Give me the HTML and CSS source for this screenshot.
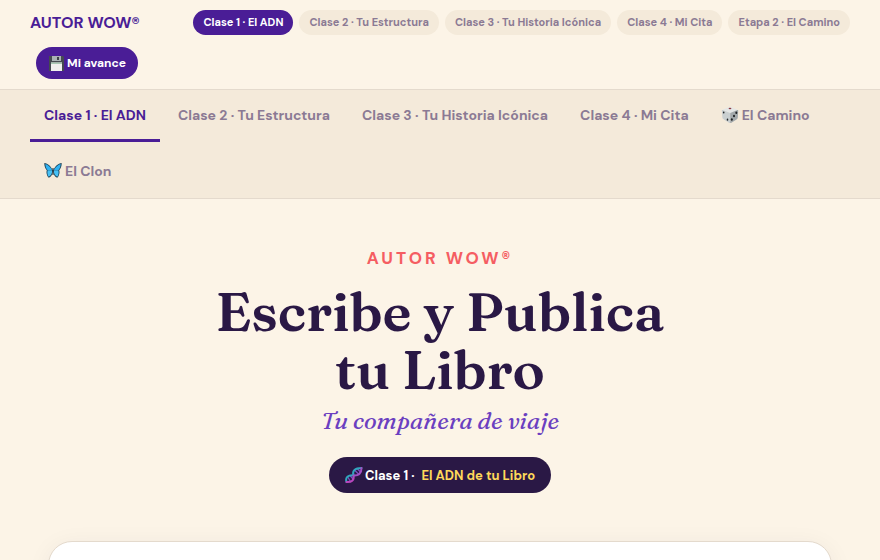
FILE: index.html
```html
<!DOCTYPE html>
<html lang="es">

<head>
  <meta charset="UTF-8">
  <meta name="viewport" content="width=device-width, initial-scale=1.0">
  <title>Autor WOW</title>
  <link rel="stylesheet" href="styles.css">
</head>

<body>

  <header class="topbar">
    <div class="logo">AUTOR WOW®</div>
    <nav class="steps">
      <a class="step active" href="#clase1">Clase 1 · El ADN</a>
      <a class="step" href="#clase2">Clase 2 · Tu Estructura</a>
      <a class="step" href="#clase3">Clase 3 · Tu Historia Icónica</a>
      <a class="step" href="#clase4">Clase 4 · Mi Cita</a>
      <a class="step" href="#camino">Etapa 2 · El Camino</a>
    </nav>
    <button class="save-btn" type="button">
      <svg class="icon-sm" viewBox="0 0 16 16" aria-hidden="true">
        <path d="M1 1h14l1 1v14H1z" fill="#454b50"/>
        <path d="M4 1h9v5H4z" fill="#aab2b5"/>
        <path d="M9 2h2v3H9z" fill="#3d4248"/>
        <path d="M3 7.500h11V16H3z" fill="#f1f0ee"/>
        <path d="M3 7.500h11V9H3z" fill="#a9c9b4"/>
      </svg>
      Mi avance
    </button>
  </header>

  <nav class="tabs">
    <button class="tab active" type="button">Clase 1 · El ADN</button>
    <button class="tab" type="button">Clase 2 · Tu Estructura</button>
    <button class="tab" type="button">Clase 3 · Tu Historia Icónica</button>
    <button class="tab" type="button">Clase 4 · Mi Cita</button>
    <button class="tab" type="button">
      <svg class="icon" viewBox="0 0 18 18" aria-hidden="true">
        <path d="M1.200 4 8 .9q1-.4 2 0L16.800 4 10 7.500z" fill="#e4e6e5"/>
        <path d="M.8 4.500q0-.8.800-.4L9.200 7v10q-.6.200-1.200-.2L2.200 13q-.7-.5-.8-1.300z" fill="#c9cfd0"/>
        <path d="M17.200 4.500q0-.8-.8-.4L9.200 7v10q.6.200 1.200-.2l5.500-3.600q.8-.6.900-1.500z" fill="#a3a9ab"/>
        <ellipse cx="9" cy="2.500" rx="1.400" ry=".7" fill="#8d3b42"/>
        <g fill="#202325">
          <ellipse cx="2.700" cy="6.500" rx=".8" ry="1.100"/>
          <ellipse cx="6.500" cy="13.700" rx=".8" ry="1.100"/>
          <ellipse cx="15.300" cy="6.800" rx="1" ry="1.200"/>
          <ellipse cx="13" cy="10" rx="1" ry="1.200"/>
          <ellipse cx="10.800" cy="13.500" rx="1" ry="1.200"/>
        </g>
      </svg>
      El Camino
    </button>
    <button class="tab" type="button">
      <svg class="icon" viewBox="0 0 18 18" aria-hidden="true">
        <path d="M8.600 8C7 4.500 4 1.300.3 1c0 3 .8 5.500 2.500 7.300-.8 2 0 5.200 1.500 7.200C6.500 15.800 8.500 13 8.700 9.500h.6c.2 3.500 2.200 6.300 4.400 6 1.500-2 2.300-5.200 1.500-7.200C16.900 6.500 17.700 4 17.700 1 14 1.300 11 4.500 9.400 8z" fill="#1d4257"/>
        <path d="M8.300 8.600C6.500 5 4 2.500 1.300 2c.2 2.700 1 4.900 2.600 6.400z" fill="#2fb2f2"/>
        <path d="M9.700 8.600C11.500 5 14 2.500 16.700 2c-.2 2.700-1 4.900-2.600 6.400z" fill="#2fb2f2"/>
        <path d="M8.200 8.600c0 3-1.400 5.600-3.500 6.100-1.100-1.700-1.800-4.300-1-6.300zM9.800 8.600c0 3 1.400 5.600 3.500 6.100 1.100-1.700 1.800-4.300 1-6.300z" fill="#45c0f5"/>
        <path d="M9 6.500v6" stroke="#20343f" stroke-width="1.200" stroke-linecap="round"/>
      </svg>
      El Clon
    </button>
  </nav>

  <main>
    <section class="hero">
      <p class="eyebrow">AUTOR WOW®</p>
      <h1>Escribe y Publica<br>tu Libro</h1>
      <p class="tagline">Tu compañera de viaje</p>
      <div class="badge">
        <svg class="icon" viewBox="0 0 18 18" aria-hidden="true">
          <g fill="none" stroke-linecap="round">
            <path d="M3 11.500l2.500 4M5 9.500l3.500 4M10 4.500l4 4M12.500 3l3 3" stroke="#7d4fc4" stroke-width="1.300"/>
            <path d="M1.500 16C0 11 3 9 8.500 9.300" stroke="#31a6bd" stroke-width="2"/>
            <path d="M1.500 16c5 .5 8-1.500 7-6.500" stroke="#b846bd" stroke-width="2"/>
            <path d="M8.500 9.500C7 4.500 10 2 16.500 2" stroke="#31a6bd" stroke-width="2"/>
            <path d="M8.500 9.500c5 .5 8-2 8-7.500" stroke="#a34fc4" stroke-width="2"/>
          </g>
        </svg>
        Clase 1 · <span class="badge-name">El ADN de tu Libro</span>
      </div>
    </section>

    <section class="card"></section>
  </main>

</body>

</html>
```

FILE: styles.css
```css
* {
  box-sizing: border-box;
}

body {
  margin: 0;
  background-color: #fcf4e7;
  color: #2a1845;
  font-family: "DM Sans", Inter, "Liberation Sans", sans-serif;
}

button {
  font-family: inherit;
  border: none;
  cursor: pointer;
}

.icon {
  flex-shrink: 0;
  width: 18px;
  height: 18px;
}

.icon-sm {
  flex-shrink: 0;
  width: 16px;
  height: 16px;
}

.topbar {
  display: flex;
  flex-wrap: wrap;
  align-items: center;
  justify-content: space-between;
  gap: 12px;
  padding: 10px 30px;
  border-bottom: 1px solid #e4dacd;
}

.logo {
  color: #4a1d96;
  font-size: 16px;
  font-weight: 700;
  line-height: 20px;
}

.steps {
  display: flex;
  gap: 6px;
}

.step {
  padding: 0 10px;
  border-radius: 20px;
  background-color: #f4eada;
  color: #8b7a94;
  font-size: 11px;
  font-weight: 700;
  line-height: 25px;
  text-decoration: none;
  white-space: nowrap;
}

.step.active {
  background-color: #4a1d96;
  color: white;
}

.save-btn {
  display: flex;
  align-items: center;
  gap: 3px;
  height: 32px;
  margin-left: 6px;
  padding: 0 12px;
  border-radius: 20px;
  background-color: #4a1d96;
  color: white;
  font-size: 12px;
  font-weight: 700;
}

.tabs {
  display: flex;
  flex-wrap: wrap;
  gap: 4px;
  padding: 0 30px;
  background-color: #f4eada;
  border-bottom: 1px solid #e4dacd;
}

.tab {
  display: flex;
  align-items: center;
  gap: 3px;
  height: 52px;
  padding: 0 14px;
  border-bottom: 3px solid transparent;
  background-color: transparent;
  color: #8b7a94;
  font-size: 14px;
  font-weight: 700;
  white-space: nowrap;
}

.tab.active {
  border-bottom-color: #4a1d96;
  color: #4a1d96;
}

.hero {
  display: flex;
  flex-direction: column;
  align-items: center;
  padding: 48px 30px;
  text-align: center;
}

.eyebrow {
  margin: 0 0 14px;
  color: #f55d62;
  font-size: 17px;
  font-weight: 700;
  line-height: 22px;
  letter-spacing: 3px;
}

h1 {
  margin: 0;
  font-family: Fraunces, "Liberation Serif", serif;
  font-size: 54px;
  font-weight: 600;
  line-height: 58px;
}

.tagline {
  margin: 6px 0 20px;
  color: #6b3fc0;
  font-family: Fraunces, "Liberation Serif", serif;
  font-size: 24px;
  font-style: italic;
  font-weight: 500;
  line-height: 32px;
}

.badge {
  display: flex;
  align-items: center;
  gap: 2px;
  height: 36px;
  padding: 0 16px;
  border-radius: 20px;
  background-color: #2a1845;
  color: white;
  font-size: 13px;
  font-weight: 700;
}

.badge-name {
  margin-left: 5px;
  color: #ffd95a;
}

.card {
  min-height: 320px;
  margin: 0 48px 48px;
  border: 1px solid #e4dacd;
  border-radius: 24px;
  background-color: white;
  box-shadow: 0 4px 24px rgba(42, 24, 69, 0.06);
}
```
